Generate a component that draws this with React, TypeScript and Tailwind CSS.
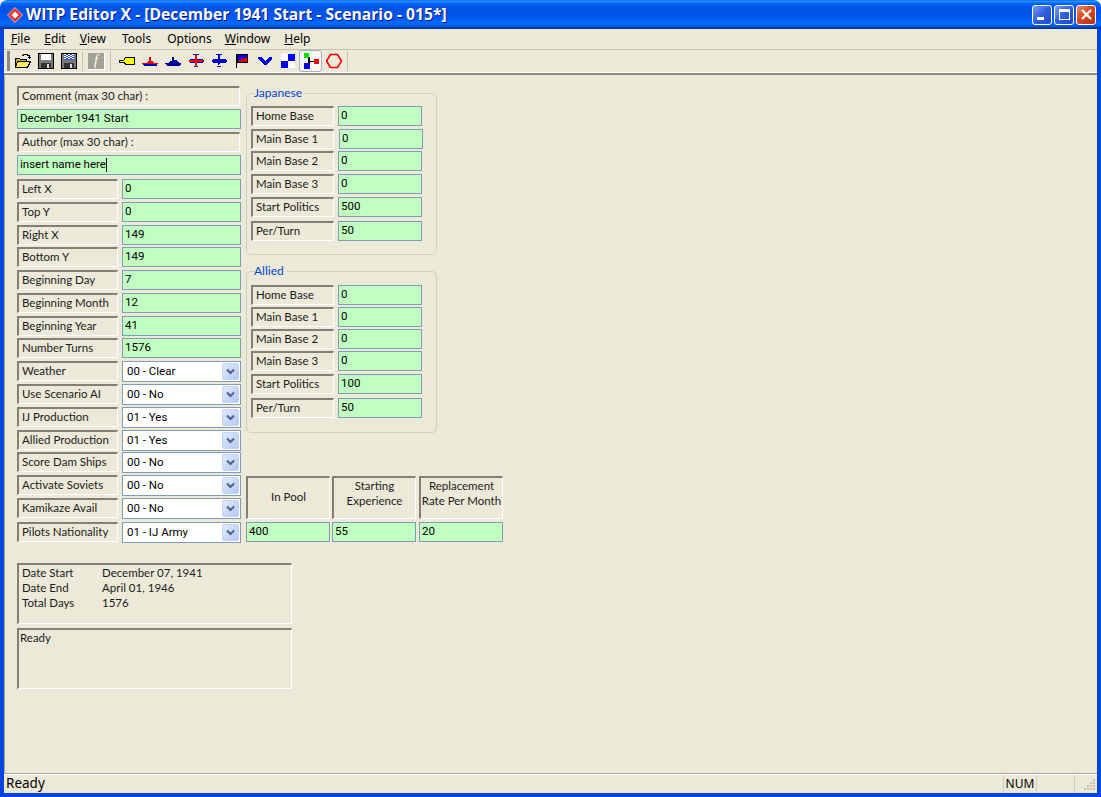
import type { ReactNode } from 'react'

const labelFont = "font-['Lato','DejaVu_Sans',sans-serif] text-[11.5px] text-[#1c1c1c]"
const fieldFont = "font-['Roboto',sans-serif] text-[11.5px] text-black"
const sunken = 'border-t-2 border-l-2 border-t-[#837f72] border-l-[#837f72] border-b border-r border-b-white border-r-white'

function Label({ children, className = '' }: { children: ReactNode; className?: string }) {
  return (
    <div className={`flex items-center whitespace-nowrap pl-[3px] pb-[2px] ${sunken} ${labelFont} ${className}`}>
      {children}
    </div>
  )
}

function Field({ value, caret, className = '' }: { value: string; caret?: boolean; className?: string }) {
  return (
    <div className={`flex items-center pl-[2px] h-[20px] border border-[#7f9db9] bg-[#c0ffc0] ${fieldFont} ${className}`}>
      {value}
      {caret && <div className="w-px h-[14px] bg-black" />}
    </div>
  )
}

function Combo({ value }: { value: string }) {
  return (
    <div className={`flex items-center justify-between h-[21px] w-[119px] border border-[#7f9db9] bg-white pl-[4px] pr-[1px] ${fieldFont}`}>
      {value}
      <span className="flex items-center justify-center w-[17px] h-[17px] rounded-[2px] bg-[linear-gradient(135deg,#e1eafe,#b4c8f6)] border border-[#c3d3fd]">
        <svg width="9" height="7" viewBox="0 0 9 7">
          <path d="M1 1.5 L4.5 5 L8 1.5" fill="none" stroke="#4d6185" strokeWidth="2" />
        </svg>
      </span>
    </div>
  )
}

const numberRows = [
  { label: 'Left X', value: '0', mt: 'mt-[4px]' },
  { label: 'Top Y', value: '0', mt: 'mt-[3px]' },
  { label: 'Right X', value: '149', mt: 'mt-[3px]' },
  { label: 'Bottom Y', value: '149', mt: 'mt-[2px]' },
  { label: 'Beginning Day', value: '7', mt: 'mt-[3px]' },
  { label: 'Beginning Month', value: '12', mt: 'mt-[3px]' },
  { label: 'Beginning Year', value: '41', mt: 'mt-[3px]' },
  { label: 'Number Turns', value: '1576', mt: 'mt-[2px]' },
]

const comboRows = [
  { label: 'Weather', value: '00 - Clear', mt: 'mt-[3px]' },
  { label: 'Use Scenario AI', value: '00 - No', mt: 'mt-[2px]' },
  { label: 'IJ Production', value: '01 - Yes', mt: 'mt-[2px]' },
  { label: 'Allied Production', value: '01 - Yes', mt: 'mt-[2px]' },
  { label: 'Score Dam Ships', value: '00 - No', mt: 'mt-[1px]' },
  { label: 'Activate Soviets', value: '00 - No', mt: 'mt-[2px]' },
  { label: 'Kamikaze Avail', value: '00 - No', mt: 'mt-[2px]' },
  { label: 'Pilots Nationality', value: '01 - IJ Army', mt: 'mt-[3px]' },
]

const groups = [
  {
    title: 'Japanese',
    box: 'mt-[1px] h-[168px]',
    rows: [
      { label: 'Home Base', value: '0', mt: 'mt-[7px]', shift: '' },
      { label: 'Main Base 1', value: '0', mt: 'mt-[3px]', shift: 'ml-[5px]' },
      { label: 'Main Base 2', value: '0', mt: 'mt-[2px]', shift: '' },
      { label: 'Main Base 3', value: '0', mt: 'mt-[3px]', shift: '' },
      { label: 'Start Politics', value: '500', mt: 'mt-[3px]', shift: '' },
      { label: 'Per/Turn', value: '50', mt: 'mt-[4px]', shift: '' },
    ],
  },
  {
    title: 'Allied',
    box: 'mt-[10px] h-[168px]',
    rows: [
      { label: 'Home Base', value: '0', mt: 'mt-[8px]', shift: '' },
      { label: 'Main Base 1', value: '0', mt: 'mt-[2px]', shift: '' },
      { label: 'Main Base 2', value: '0', mt: 'mt-[2px]', shift: '' },
      { label: 'Main Base 3', value: '0', mt: 'mt-[2px]', shift: '' },
      { label: 'Start Politics', value: '100', mt: 'mt-[3px]', shift: '' },
      { label: 'Per/Turn', value: '50', mt: 'mt-[4px]', shift: '' },
    ],
  },
]

const pool = [
  { head: ['In Pool'], value: '400', pad: 'pb-[4px]', gap: 'mr-[2px]' },
  { head: ['Starting', 'Experience'], value: '55', pad: 'pb-[11px]', gap: 'mr-[3px]' },
  { head: ['Replacement', 'Rate Per Month'], value: '20', pad: 'pb-[11px]', gap: '' },
]

function Group({ title, box, rows }: (typeof groups)[number]) {
  return (
    <fieldset className={`w-[191px] rounded-[5px] border border-[#d0d0bf] pl-[4px] ${box}`}>
      <legend className="ml-[3px] pr-[3px] font-['Lato',sans-serif] text-[12px] leading-[12px] text-[#0046d5]">{title}</legend>
      {rows.map(r => (
        <div key={r.label} className={`flex ${r.mt}`}>
          <Label className="w-[83px] h-[20px]">{r.label}</Label>
          <Field value={r.value} className={`w-[84px] ${r.shift ? 'ml-[5px]' : 'ml-[4px]'}`} />
        </div>
      ))}
    </fieldset>
  )
}

// toolbar glyphs, drawn on a 16 grid
const Px = ({ children }: { children: ReactNode }) => (
  <svg width="16" height="16" viewBox="0 0 16 16" shapeRendering="crispEdges">{children}</svg>
)

const icons: Record<string, ReactNode> = {
  open: (
    <Px>
      <path d="M0.5 5.5h4l1 1h6v2h-9l-2 6z" fill="#c8a820" stroke="#000" />
      <path d="M2.5 8.5h13l-3 6H0.5z" fill="#ffe95a" stroke="#000" />
      <path d="M7 3V2h1V1h4v1h2v2h1v1" fill="none" stroke="#000" />
      <path d="M13 4h3l-1.500 2z" fill="#000" />
    </Px>
  ),
  save: (
    <Px>
      <path d="M0.500 0.500h15v15h-15z" fill="#7a7a7a" stroke="#000" />
      <path d="M3 1h10v6H3z" fill="#fff" />
      <path d="M3 10h10v5H3z" fill="#333" />
      <path d="M9 11h2v4H9z" fill="#ddd" />
    </Px>
  ),
  saveAs: (
    <Px>
      <path d="M0.500 0.500h15v15h-15z" fill="#7a7a7a" stroke="#000" />
      <path d="M3 1h10v6H3z" fill="#3a5bf0" />
      <path d="M3 1h2v1H3zm4 0h2v1H7zm4 0h2v1h-2zM5 2h2v1H5zm4 0h2v1H9zM3 3h2v1H3zm4 0h2v1H7zm4 0h2v1h-2zM5 4h2v1H5zm4 0h2v1H9zM3 5h2v1H3zm4 0h2v1H7zm4 0h2v1h-2z" fill="#fff" />
      <path d="M3 10h10v5H3z" fill="#333" />
      <path d="M9 11h2v4H9z" fill="#ddd" />
    </Px>
  ),
  tag: (
    <Px>
      <path d="M0.500 7.500h4l2-3h8.500v6.500H6.500l-2-2h-4z" fill="#ffff00" stroke="#000" />
    </Px>
  ),
  shipRed: (
    <Px>
      <path d="M7 4h2v4h1l2 2H4l2-2h1z" fill="#e00000" />
      <path d="M0 10h16v1H0z" fill="#e00000" />
      <path d="M1 11h14v1l-1 1H2l-1-1z" fill="#0000c8" />
    </Px>
  ),
  shipBlue: (
    <Px>
      <path d="M7 4h2v3h2l3 3h2v1l-2 2H2l-2-2v-1h3l2-2h2z" fill="#00009c" />
    </Px>
  ),
  planeRed: (
    <Px>
      <path d="M5 1h6v1H9v4h5l2 2-2 2H9l-1 3h2v1H6v-1h2L7 10H2L0 8l2-2h5V2H5z" fill="#0000c8" />
      <path d="M1 7h14v2H1z" fill="#ff0000" />
      <path d="M7 2h2v11H7z" fill="#ff0000" />
    </Px>
  ),
  planeBlue: (
    <Px>
      <path d="M5 1h6v1H9v4h5l2 2-2 2H9l-1 3h2v1H6v-1h2L7 10H2L0 8l2-2h5V2H5z" fill="#0000c8" />
    </Px>
  ),
  flag: (
    <Px>
      <path d="M2 1h1v14H2z" fill="#000" />
      <path d="M3 1h11v9H3z" fill="#000" />
      <path d="M4 2h9v2l-3 1-6 3z" fill="#0000e0" />
      <path d="M13 4v5H4V8l6-3z" fill="#e00000" />
    </Px>
  ),
  chevron: (
    <Px>
      <path d="M1 4h3l4 4 4-4h3v2l-6 6H7L1 6z" fill="#0000e0" />
    </Px>
  ),
  checks: (
    <Px>
      <path d="M8 1h7v7H8zM1 8h7v7H1z" fill="#0000ff" />
      <path d="M1 1h7v7H1zM8 8h7v7H8z" fill="#fff" />
    </Px>
  ),
  tree: (
    <Px>
      <path d="M5 4h2v3.500h4V9H7v2H5z" fill="#000" />
      <path d="M1 0h5v5H1z" fill="#00e000" />
      <path d="M11 6h5v5h-5z" fill="#ff0000" />
      <path d="M1 10h6v6H1z" fill="#0000ff" />
    </Px>
  ),
  hex: (
    <Px>
      <path d="M4.500 1.500h7l4 6.500-4 6.500h-7L.5 8z" fill="none" stroke="#ff0000" strokeWidth="1.600" shapeRendering="auto" />
    </Px>
  ),
}

function ToolButton({ name, active }: { name: string; active?: boolean }) {
  return (
    <div className={`flex items-center justify-center w-[23px] h-[22px] ${active ? 'rounded-[3px] border border-[#a0b4c8] bg-[#f7f6f0]' : ''}`}>
      {icons[name]}
    </div>
  )
}

const Sep = () => <div className="w-px h-[20px] mx-[2px] bg-[#c5c2b2]" />

function WinButton({ kind }: { kind: 'min' | 'max' | 'close' }) {
  const bg =
    kind === 'close'
      ? 'bg-[linear-gradient(135deg,#e88a70,#d9481f_45%,#b8300c)]'
      : 'bg-[linear-gradient(135deg,#7b9df0,#2f5fe0_50%,#1f48c8)]'
  return (
    <div className={`flex items-center justify-center w-[20px] h-[20px] rounded-[3px] border border-white ${bg}`}>
      {kind === 'min' && <div className="mt-[8px] mr-[4px] w-[7px] h-[3px] bg-white" />}
      {kind === 'max' && <div className="w-[11px] h-[11px] border border-white border-t-[3px]" />}
      {kind === 'close' && (
        <svg width="13" height="13" viewBox="0 0 13 13">
          <path d="M2 2 L11 11 M11 2 L2 11" stroke="#fff" strokeWidth="2.400" />
        </svg>
      )}
    </div>
  )
}

export default function App() {
  return (
    <div className="flex flex-col w-[1101px] h-[797px] bg-white overflow-hidden">
      <div className="flex items-center shrink-0 h-[29px] pl-[7px] pr-[5px] rounded-t-[7px] bg-[linear-gradient(180deg,#0058ee_0%,#3593ff_4%,#288eff_6%,#127dff_8%,#036ffc_10%,#0262ee_14%,#0057e5_20%,#0054e3_24%,#0055eb_56%,#005bf5_66%,#026afe_76%,#0062ef_86%,#0052d6_92%,#0040ab_94%,#003092_100%)]">
        <svg width="16" height="16" viewBox="0 0 16 16">
          <path d="M8 0.500 L15.500 8 L8 15.500 L0.500 8 Z" fill="#e8352a" stroke="#fff" strokeWidth="0.600" />
          <path d="M8 4.500 L11.500 8 L8 11.500 L4.500 8 Z" fill="#fff" />
        </svg>
        <span className="ml-[3px] font-['Open_Sans',sans-serif] font-bold text-[15.700px] text-white whitespace-nowrap [text-shadow:1px_1px_#0f1089]">
          WITP Editor X - [December 1941 Start - Scenario - 015*]
        </span>
        <div className="ml-auto flex gap-[2px]">
          <WinButton kind="min" />
          <WinButton kind="max" />
          <WinButton kind="close" />
        </div>
      </div>

      <div className="flex-1 flex flex-col min-h-0 border-x-4 border-b-4 border-[#0845dd] bg-[#ece9d8]">
        <div className="flex items-center h-[20px] pl-[1px] font-['Noto_Sans',sans-serif] text-[12px] text-black">
          {[
            ['F', 'ile', 'ml-[6px]'],
            ['E', 'dit', 'ml-[14px]'],
            ['V', 'iew', 'ml-[14px]'],
            ['', 'Tools', 'ml-[16px]'],
            ['', 'Options', 'ml-[16px]'],
            ['W', 'indow', 'ml-[13px]'],
            ['H', 'elp', 'ml-[14px]'],
          ].map(([u, rest, ml]) => (
            <span key={rest} className={ml}>
              <span className="underline">{u}</span>
              {rest}
            </span>
          ))}
        </div>

        <div className="flex items-center h-[24px] pl-[3px] border-t border-t-[#c5c2b2] border-b border-b-white">
          <div className="w-[3px] h-[20px] mr-[1px] bg-[#8c8a7c]" />
          <ToolButton name="open" />
          <ToolButton name="save" />
          <ToolButton name="saveAs" />
          <Sep />
          <div className="flex items-center justify-center w-[23px] h-[22px]">
            <div className="flex items-center justify-center w-[17px] h-[17px] bg-[#a3a194] border-r border-b border-white text-white italic font-['Liberation_Serif',serif] text-[14px] leading-none">
              f
            </div>
          </div>
          <Sep />
          <div className="w-[2px]" />
          <ToolButton name="tag" />
          <ToolButton name="shipRed" />
          <ToolButton name="shipBlue" />
          <ToolButton name="planeRed" />
          <ToolButton name="planeBlue" />
          <ToolButton name="flag" />
          <ToolButton name="chevron" />
          <ToolButton name="checks" />
          <ToolButton name="tree" active />
          <ToolButton name="hex" />
          <Sep />
        </div>

        <div className="flex-1 min-h-0 border-t-2 border-l border-t-[#8c8a7c] border-l-[#aca899] pl-[12px] pt-[11px]">
          <div className="flex">
            <div className="w-[224px]">
              <Label className="w-[223px] h-[20px]">Comment (max 30 char) :</Label>
              <Field value="December 1941 Start" className="mt-[3px] w-[224px]" />
              <Label className="mt-[3px] w-[223px] h-[20px]">Author (max 30 char) :</Label>
              <Field value="insert name here" caret className="mt-[3px] w-[224px]" />
              {numberRows.map(r => (
                <div key={r.label} className={`flex gap-[4px] ${r.mt}`}>
                  <Label className="w-[101px] h-[20px]">{r.label}</Label>
                  <Field value={r.value} className="w-[119px]" />
                </div>
              ))}
              {comboRows.map(r => (
                <div key={r.label} className={`flex gap-[4px] ${r.mt}`}>
                  <Label className="w-[101px] h-[20px]">{r.label}</Label>
                  <Combo value={r.value} />
                </div>
              ))}
            </div>
            <div className="ml-[5px]">
              {groups.map(g => (
                <Group key={g.title} {...g} />
              ))}
              <div className="mt-[43px] flex">
                {pool.map(p => (
                  <div key={p.value} className={`w-[84px] ${p.gap}`}>
                    <div className={`flex flex-col items-center justify-center h-[43px] ${p.pad} ${sunken} ${labelFont} leading-[15px] whitespace-nowrap`}>
                      {p.head.map(h => (
                        <span key={h}>{h}</span>
                      ))}
                    </div>
                    <Field value={p.value} className="mt-[3px]" />
                  </div>
                ))}
              </div>
            </div>
          </div>

          <div className={`mt-[20px] w-[275px] h-[61px] pl-[3px] ${sunken} ${labelFont} leading-[15px]`}>
            <div className="flex"><span className="w-[80px]">Date Start</span>December 07, 1941</div>
            <div className="flex"><span className="w-[80px]">Date End</span>April 01, 1946</div>
            <div className="flex"><span className="w-[80px]">Total Days</span>1576</div>
          </div>
          <div className={`mt-[4px] w-[275px] h-[61px] pl-[1px] ${sunken} ${labelFont} leading-[15px]`}>Ready</div>
        </div>

        <div className="flex items-center shrink-0 h-[20px] border-t border-t-[#aca899] shadow-[inset_0_1px_0_#fff] font-['Noto_Sans',sans-serif] text-[13.500px] text-black">
          <span className="pl-[2px]">Ready</span>
          <div className="ml-auto flex items-center h-full">
            <div className="flex items-center justify-center w-[34px] h-[18px] border-x border-x-[#cfccbb] text-[12px]">NUM</div>
            <div className="w-[38px] h-[18px] border-r border-r-[#cfccbb]" />
            <svg width="22" height="18" viewBox="0 0 22 18" shapeRendering="crispEdges">
              <path d="M18 4h2v2h-2zM15 7h2v2h-2zM18 7h2v2h-2zM12 10h2v2h-2zM15 10h2v2h-2zM18 10h2v2h-2zM9 13h2v2H9zM12 13h2v2h-2zM15 13h2v2h-2zM18 13h2v2h-2z" fill="#c5c2b2" />
            </svg>
          </div>
        </div>
      </div>
    </div>
  )
}
